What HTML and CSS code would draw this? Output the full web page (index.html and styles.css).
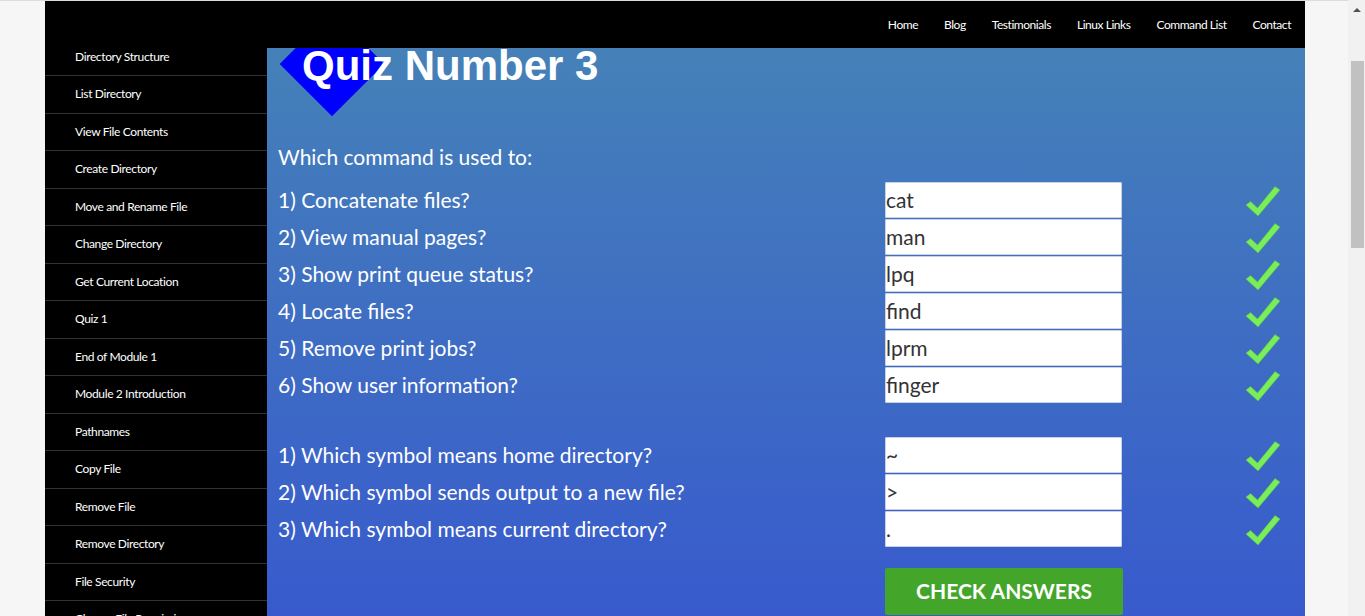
FILE: index.html
```html
<!DOCTYPE html>
<html lang="en">
<head>
<meta charset="utf-8">
<title>Quiz Number 3</title>
<link rel="stylesheet" href="styles.css">
</head>
<body>
<div class="page">
  <header class="topbar">
    <nav class="topnav">
      <a href="#">Home</a>
      <a href="#">Blog</a>
      <a href="#">Testimonials</a>
      <a href="#">Linux Links</a>
      <a href="#">Command List</a>
      <a href="#">Contact</a>
    </nav>
  </header>
  <div class="main">
    <aside class="sidebar">
      <ul class="side-list">
        <li>Directory Structure</li>
        <li>List Directory</li>
        <li>View File Contents</li>
        <li>Create Directory</li>
        <li>Move and Rename File</li>
        <li>Change Directory</li>
        <li>Get Current Location</li>
        <li>Quiz 1</li>
        <li>End of Module 1</li>
        <li>Module 2 Introduction</li>
        <li>Pathnames</li>
        <li>Copy File</li>
        <li>Remove File</li>
        <li>Remove Directory</li>
        <li>File Security</li>
        <li>Change File Permissions</li>
        <li>Quiz 2</li>
      </ul>
    </aside>
    <section class="content">
      <div class="diamond"></div>
      <h1 class="title">Quiz Number 3</h1>
      <p class="heading">Which command is used to:</p>
      <div class="quiz">
        <label class="q">1) Concatenate files?</label><input class="ans" value="cat"><span class="ok"><svg viewBox="0 0 36 32" width="36" height="32"><path d="M1 20 L5.5 16.5 L12.5 23 L30 1.5 L35 5 L13 31 Z"/></svg></span>
        <label class="q">2) View manual pages?</label><input class="ans" value="man"><span class="ok"><svg viewBox="0 0 36 32" width="36" height="32"><path d="M1 20 L5.5 16.5 L12.5 23 L30 1.5 L35 5 L13 31 Z"/></svg></span>
        <label class="q">3) Show print queue status?</label><input class="ans" value="lpq"><span class="ok"><svg viewBox="0 0 36 32" width="36" height="32"><path d="M1 20 L5.5 16.5 L12.5 23 L30 1.5 L35 5 L13 31 Z"/></svg></span>
        <label class="q">4) Locate files?</label><input class="ans" value="find"><span class="ok"><svg viewBox="0 0 36 32" width="36" height="32"><path d="M1 20 L5.5 16.5 L12.5 23 L30 1.5 L35 5 L13 31 Z"/></svg></span>
        <label class="q">5) Remove print jobs?</label><input class="ans" value="lprm"><span class="ok"><svg viewBox="0 0 36 32" width="36" height="32"><path d="M1 20 L5.5 16.5 L12.5 23 L30 1.5 L35 5 L13 31 Z"/></svg></span>
        <label class="q">6) Show user information?</label><input class="ans" value="finger"><span class="ok"><svg viewBox="0 0 36 32" width="36" height="32"><path d="M1 20 L5.5 16.5 L12.5 23 L30 1.5 L35 5 L13 31 Z"/></svg></span>
      </div>
      <div class="quiz quiz2">
        <label class="q">1) Which symbol means home directory?</label><input class="ans" value="~"><span class="ok"><svg viewBox="0 0 36 32" width="36" height="32"><path d="M1 20 L5.5 16.5 L12.5 23 L30 1.5 L35 5 L13 31 Z"/></svg></span>
        <label class="q">2) Which symbol sends output to a new file?</label><input class="ans" value="&gt;"><span class="ok"><svg viewBox="0 0 36 32" width="36" height="32"><path d="M1 20 L5.5 16.5 L12.5 23 L30 1.5 L35 5 L13 31 Z"/></svg></span>
        <label class="q">3) Which symbol means current directory?</label><input class="ans" value="."><span class="ok"><svg viewBox="0 0 36 32" width="36" height="32"><path d="M1 20 L5.5 16.5 L12.5 23 L30 1.5 L35 5 L13 31 Z"/></svg></span>
      </div>
      <div class="actions">
        <button class="check-btn">CHECK ANSWERS</button>
      </div>
    </section>
  </div>
</div>
<div class="scrollbar"><span class="sb-arrow"></span><span class="sb-thumb"></span></div>
</body>
</html>
```

FILE: styles.css
```css
html {
  overflow: hidden;
}
body {
  margin: 0;
  background: #f6f6f6;
  border-top: 1px solid #dcdcdc;
  font-family: Lato, "Open Sans", Arial, sans-serif;
  height: 615px;
  overflow: hidden;
}
.page {
  width: 1260px;
  margin-left: 45px;
}
.topbar {
  background: #000;
  height: 47px;
  display: flex;
  align-items: center;
  justify-content: flex-end;
  position: relative;
  z-index: 2;
}
.topnav {
  display: flex;
  gap: 26px;
  padding-right: 14px;
}
.topnav a {
  color: #fff;
  text-decoration: none;
  font-size: 12px;
  letter-spacing: -0.45px;
  line-height: 16px;
}
.main {
  display: flex;
  height: 568px;
  overflow: hidden;
}
.sidebar {
  width: 222px;
  flex: none;
  background: #000;
  overflow: hidden;
}
.side-list {
  list-style: none;
  margin: -9.5px 0 0 0;
  padding: 0;
}
.side-list li {
  height: 36.5px;
  line-height: 36.5px;
  border-bottom: 1px solid #323232;
  padding-left: 30px;
  color: #fff;
  font-size: 12px;
  letter-spacing: -0.37px;
  white-space: nowrap;
}
.content {
  flex: 1;
  position: relative;
  overflow: hidden;
  padding-left: 11px;
  background: linear-gradient(to bottom, #4581b8 0%, #3f6fc2 45%, #385acd 100%);
}
.diamond {
  position: absolute;
  left: 28px;
  top: -21px;
  width: 74px;
  height: 74px;
  background: #0000ff;
  transform: rotate(45deg);
}
.title {
  position: relative;
  margin: 0 0 0 24px;
  font-family: "Liberation Sans", Arial, sans-serif;
  font-weight: bold;
  font-size: 42px;
  line-height: 36px;
  color: #fff;
}
.heading {
  margin: 55px 0 7px 0;
  color: #fff;
  font-size: 21px;
  line-height: 36px;
}
.quiz {
  display: grid;
  grid-template-columns: 607px 237px 123px 36px;
  grid-auto-rows: 36px;
  row-gap: 1px;
  align-items: center;
}
.quiz2 {
  margin-top: 34px;
}
.q {
  color: #fff;
  font-size: 21px;
  line-height: 24px;
  white-space: nowrap;
  margin-top: -1px;
}
.ans {
  grid-column: 2;
  box-sizing: border-box;
  width: 237px;
  height: 36px;
  margin: 0;
  padding: 0 0 2px 0;
  border: 1px solid #c9d2e3;
  border-radius: 1px;
  background: #fff;
  font-family: Lato, "Open Sans", Arial, sans-serif;
  font-size: 21px;
  color: #333;
  outline: none;
}
.ok {
  grid-column: 4;
  display: flex;
  align-items: center;
  justify-content: center;
  height: 36px;
}
.ok svg {
  display: block;
  margin-top: 1px;
}
.ok path {
  fill: #78ef58;
  stroke: #5fc046;
  stroke-width: 0.6;
}
.actions {
  margin-top: 21px;
  padding-left: 607px;
}
.check-btn {
  width: 238px;
  height: 47px;
  border: none;
  border-radius: 2px;
  background: #43a62a;
  color: #fff;
  font-family: Lato, "Open Sans", Arial, sans-serif;
  font-weight: bold;
  font-size: 21px;
  padding: 0 0 2px 0;
  cursor: pointer;
}
.scrollbar {
  position: fixed;
  right: 0;
  top: 0;
  width: 17px;
  height: 616px;
  background: #f1f1f1;
}
.sb-arrow {
  position: absolute;
  left: 5px;
  top: 8px;
  width: 0;
  height: 0;
  border-left: 4px solid transparent;
  border-right: 4px solid transparent;
  border-bottom: 4px solid #505050;
}
.sb-thumb {
  position: absolute;
  left: 3px;
  top: 61px;
  width: 13px;
  height: 187px;
  background: #c1c1c1;
}
```
